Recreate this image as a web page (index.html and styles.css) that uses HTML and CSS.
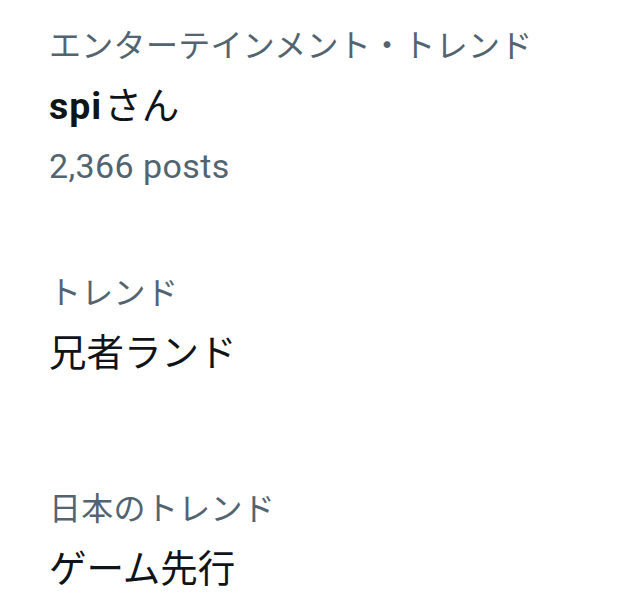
FILE: index.html
```html
<!doctype html>
<html>
<head>
<meta charset="utf-8">
<title>トレンド</title>
<link rel="stylesheet" href="styles.css">
</head>
<body>
<div class="trends">
  <div class="trend">
    <div class="category">エンターテインメント・トレンド</div>
    <div class="name"><b>spi</b>さん</div>
    <div class="count">2,366 posts</div>
  </div>
  <div class="trend no-count">
    <div class="category">トレンド</div>
    <div class="name">兄者ランド</div>
  </div>
  <div class="trend no-count">
    <div class="category">日本のトレンド</div>
    <div class="name">ゲーム先行</div>
  </div>
</div>
</body>
</html>
```

FILE: styles.css
```css
html {
  font-family: Roboto, "Noto Sans CJK JP", sans-serif;
  background-color: white;
}
body {
  margin: 0;
  padding: 0;
}
.trends {
  padding: 16px 20px 0 49px;
}
.trend {
  padding-bottom: 66px;
}
.trend.no-count {
  padding-bottom: 96px;
}
.category {
  color: #536471;
  font-size: 32px;
  letter-spacing: 0.3px;
  line-height: 60px;
}
.name {
  color: #0f1419;
  font-size: 37.5px;
  line-height: 60px;
}
.name b {
  font-weight: bold;
  letter-spacing: 1px;
  margin-right: 2px;
}
.count {
  color: #536471;
  font-size: 34px;
  letter-spacing: 0.4px;
  line-height: 61px;
}
```
